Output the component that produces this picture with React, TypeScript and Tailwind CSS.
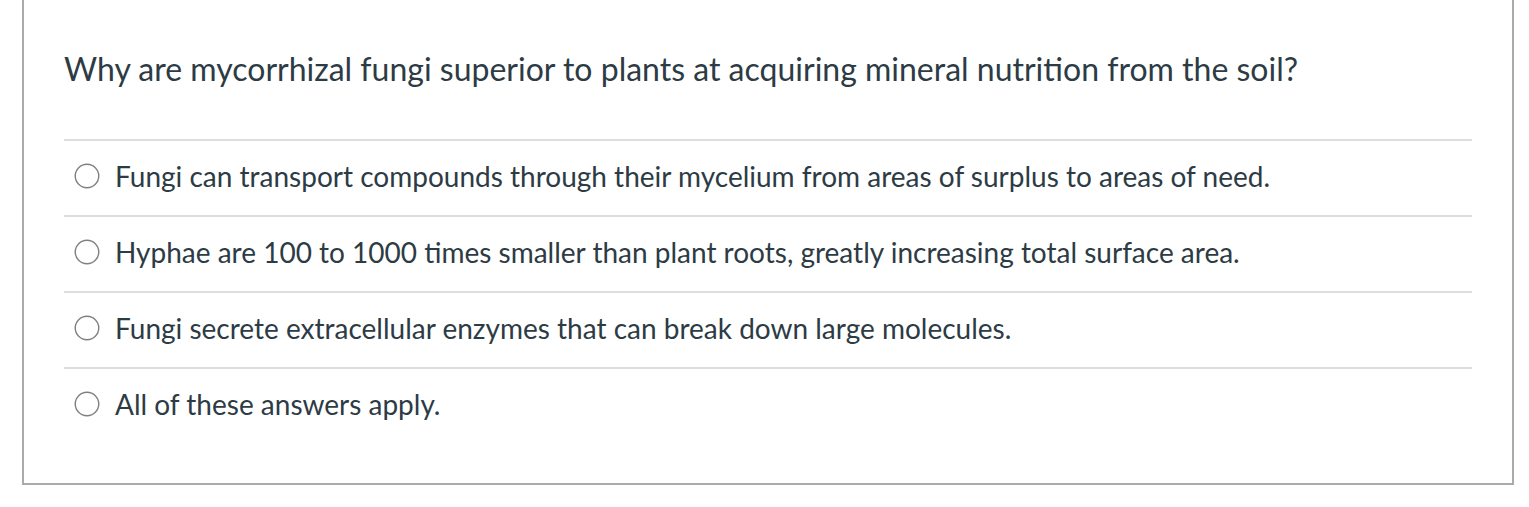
import React from 'react';

const answers = [
  'Fungi can transport compounds through their mycelium from areas of surplus to areas of need.',
  'Hyphae are 100 to 1000 times smaller than plant roots, greatly increasing total surface area.',
  'Fungi secrete extracellular enzymes that can break down large molecules.',
  'All of these answers apply.',
];

const Radio: React.FC = () => (
  <svg width="26" height="26" viewBox="0 0 26 26" className="shrink-0">
    <circle cx="13" cy="13" r="11.75" fill="white" stroke="#808080" strokeWidth="1.4" />
  </svg>
);

export default function App() {
  return (
    <div className="w-[1529px] h-[507px] bg-white text-[#2d3b45]" style={{ fontFamily: 'Lato, "Noto Sans", sans-serif' }}>
      <div className="ml-[22px] w-[1492px] h-[485px] border-2 border-t-0 border-[#aaa] px-10 pt-[45px]">
        {/* Question */}
        <div className="h-[94px] text-[32px] leading-[48px]">
          Why are mycorrhizal fungi superior to plants at acquiring mineral nutrition from the soil?
        </div>

        {/* Answers */}
        <div>
          {answers.map((a) => (
            <div key={a} className="h-[76px] border-t-2 border-[#ddd] flex items-center gap-[15px] pl-[10px] pb-[5px]">
              <Radio />
              <span className="text-[28px] leading-[40px]">{a}</span>
            </div>
          ))}
        </div>
      </div>
    </div>
  );
}
